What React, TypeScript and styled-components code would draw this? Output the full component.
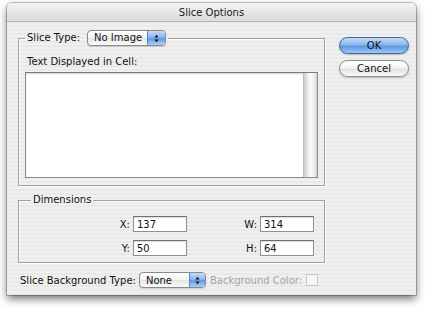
import { createGlobalStyle, styled } from "styled-components";

const GlobalStyle = createGlobalStyle`
  html, body {
    margin: 0;
    background: #ffffff;
  }

  body {
    font-family: "DejaVu Sans", "Noto Sans", sans-serif;
    font-size: 10px;
    color: #111111;
  }
`;

const PopUp = ({ label, width, arrow = 16 }: { label: string; width: number; arrow?: number }) => (
  <PopUpBox style={{ width }}>
    <PopUpText>{label}</PopUpText>
    <PopUpArrows $width={arrow}>
      <svg width="5" height="9" viewBox="0 0 5 9">
        <path d="M0.5 3.5 L2.5 0.8 L4.5 3.5 Z" fill="#111" />
        <path d="M0.5 5.5 L2.5 8.2 L4.5 5.5 Z" fill="#111" />
      </svg>
    </PopUpArrows>
  </PopUpBox>
);

const App = () => {
  return (
    <>
      <GlobalStyle />
      <Page>
        <Window>
          <TitleBar>Slice Options</TitleBar>

          <Body>
            <Main>
              <Group $bottom={7}>
                <Legend $inset={0}>
                  <Label>Slice Type:</Label>
                  <PopUp label="No Image" width={79} arrow={17} />
                </Legend>

                <FieldLabel>Text Displayed in Cell:</FieldLabel>

                <TextArea>
                  <ScrollTrack />
                </TextArea>
              </Group>

              <Group $bottom={6}>
                <Legend $inset={6}>Dimensions</Legend>

                <DimensionsGrid>
                  <DimLabel>X:</DimLabel>
                  <NumberField>137</NumberField>
                  <DimLabel>W:</DimLabel>
                  <NumberField>314</NumberField>

                  <DimLabel>Y:</DimLabel>
                  <NumberField>50</NumberField>
                  <DimLabel>H:</DimLabel>
                  <NumberField>64</NumberField>
                </DimensionsGrid>
              </Group>

              <BottomRow>
                <Label>Slice Background Type:</Label>
                <PopUp label="None" width={67} arrow={15} />
                <DisabledLabel>Background Color:</DisabledLabel>
                <ColorSwatch />
              </BottomRow>
            </Main>

            <Buttons>
              <PillButton $primary>OK</PillButton>
              <PillButton>Cancel</PillButton>
            </Buttons>
          </Body>
        </Window>
      </Page>
    </>
  );
};

const Page = styled.div`
  width: 425px;
  height: 309px;
  padding: 3px 0 0 7px;
  box-sizing: border-box;
`;

const Window = styled.div`
  width: 409px;
  height: 292px;
  display: flex;
  flex-direction: column;
  border-radius: 5px 5px 0 0;
  overflow: hidden;
  background: repeating-linear-gradient(
    to bottom,
    #f0f0f0 0px,
    #f0f0f0 2px,
    #e9e9e9 2px,
    #e9e9e9 4px
  );
  box-shadow: 0 0 0 1px rgba(0, 0, 0, 0.22), 0 4px 9px rgba(0, 0, 0, 0.55);
`;

const TitleBar = styled.div`
  height: 18px;
  flex-shrink: 0;
  display: flex;
  align-items: center;
  justify-content: center;
  font-size: 10px;
  color: #1a1a1a;
  background: linear-gradient(to bottom, #f4f4f4, #e4e4e4 60%, #dcdcdc);
  border-bottom: 1px solid #b4b4b4;
`;

const Body = styled.div`
  flex: 1;
  display: flex;
  column-gap: 14px;
  padding: 8px 7px 0 11px;
`;

const Main = styled.div`
  width: 307px;
  display: flex;
  flex-direction: column;
`;

const Group = styled.fieldset<{ $bottom: number }>`
  margin: 0 0 8px 0;
  padding: 0 6px ${({ $bottom }) => $bottom}px 6px;
  border: 1px solid #a2a2a2;
  box-shadow: inset 1px 1px 0 rgba(255, 255, 255, 0.7), 1px 1px 0 rgba(255, 255, 255, 0.7);
  min-width: 0;
`;

const Legend = styled.legend<{ $inset: number }>`
  display: flex;
  align-items: center;
  column-gap: 7px;
  margin-left: ${({ $inset }) => $inset}px;
  padding: 0 2px;
  line-height: 12px;
`;

const Label = styled.span`
  white-space: nowrap;
`;

const FieldLabel = styled.div`
  margin: 11px 0 5px 2px;
  line-height: 10px;
`;

const TextArea = styled.div`
  height: 104px;
  display: flex;
  justify-content: flex-end;
  background: #ffffff;
  border: 1px solid #8d8d8d;
  border-top-color: #7a7a7a;
  box-shadow: inset 0 1px 2px rgba(0, 0, 0, 0.18);
`;

const ScrollTrack = styled.div`
  width: 13px;
  background: linear-gradient(
    to right,
    #c9c9c9,
    #e9e9e9 25%,
    #fbfbfb 50%,
    #ececec 80%,
    #d2d2d2
  );
  border-left: 1px solid #bdbdbd;
`;

const DimensionsGrid = styled.div`
  display: grid;
  grid-template-columns: 108px 54px 73px 54px;
  grid-auto-rows: 16px;
  row-gap: 8px;
  margin-top: 10px;
`;

const DimLabel = styled.span`
  display: flex;
  align-items: center;
  justify-content: flex-end;
  padding-right: 3px;
`;

const NumberField = styled.div`
  display: flex;
  align-items: center;
  padding-left: 3px;
  background: #ffffff;
  border: 1px solid #8f8f8f;
  border-top-color: #6f6f6f;
  box-shadow: inset 0 1px 1px rgba(0, 0, 0, 0.15);
  box-sizing: border-box;
`;

const BottomRow = styled.div`
  display: flex;
  align-items: center;
  column-gap: 3px;
  margin: 1px 0 0 2px;
`;

const DisabledLabel = styled.span`
  margin-left: 1px;
  color: #a4a4a4;
  white-space: nowrap;
`;

const ColorSwatch = styled.span`
  width: 10px;
  height: 10px;
  margin-left: 1px;
  border: 1px solid #c8c8c8;
  background: #f6f6f6;
`;

const PopUpBox = styled.div`
  height: 16px;
  display: flex;
  align-items: stretch;
  flex-shrink: 0;
  box-sizing: border-box;
  border: 1px solid #8a8a8a;
  border-radius: 4px;
  overflow: hidden;
  background: linear-gradient(to bottom, #ffffff, #f2f2f2 50%, #e4e4e4 51%, #fafafa);
  box-shadow: 0 1px 1px rgba(0, 0, 0, 0.15);
`;

const PopUpText = styled.span`
  flex: 1;
  display: flex;
  align-items: center;
  padding-left: 6px;
`;

const PopUpArrows = styled.span<{ $width: number }>`
  width: ${({ $width }) => $width}px;
  display: flex;
  align-items: center;
  justify-content: center;
  border-left: 1px solid #5c84bf;
  background: linear-gradient(to bottom, #c4dcf6, #8bb8ec 45%, #5f9be2 55%, #a9d2fb);
`;

const Buttons = styled.div`
  width: 70px;
  display: flex;
  flex-direction: column;
  row-gap: 6px;
  padding-top: 7px;
`;

const PillButton = styled.div<{ $primary?: boolean }>`
  height: 17px;
  display: flex;
  align-items: center;
  justify-content: center;
  box-sizing: border-box;
  border-radius: 9px;
  border: 1px solid ${({ $primary }) => ($primary ? "#3f629a" : "#8b8b8b")};
  background: ${({ $primary }) =>
    $primary
      ? "linear-gradient(to bottom, #c6dcf5, #89b6ea 45%, #5b96e0 55%, #9ccbf7)"
      : "linear-gradient(to bottom, #ffffff, #f4f4f4 45%, #e3e3e3 55%, #fbfbfb)"};
  box-shadow: 0 1px 2px rgba(0, 0, 0, 0.2);
  color: #111111;
`;

export default App;
